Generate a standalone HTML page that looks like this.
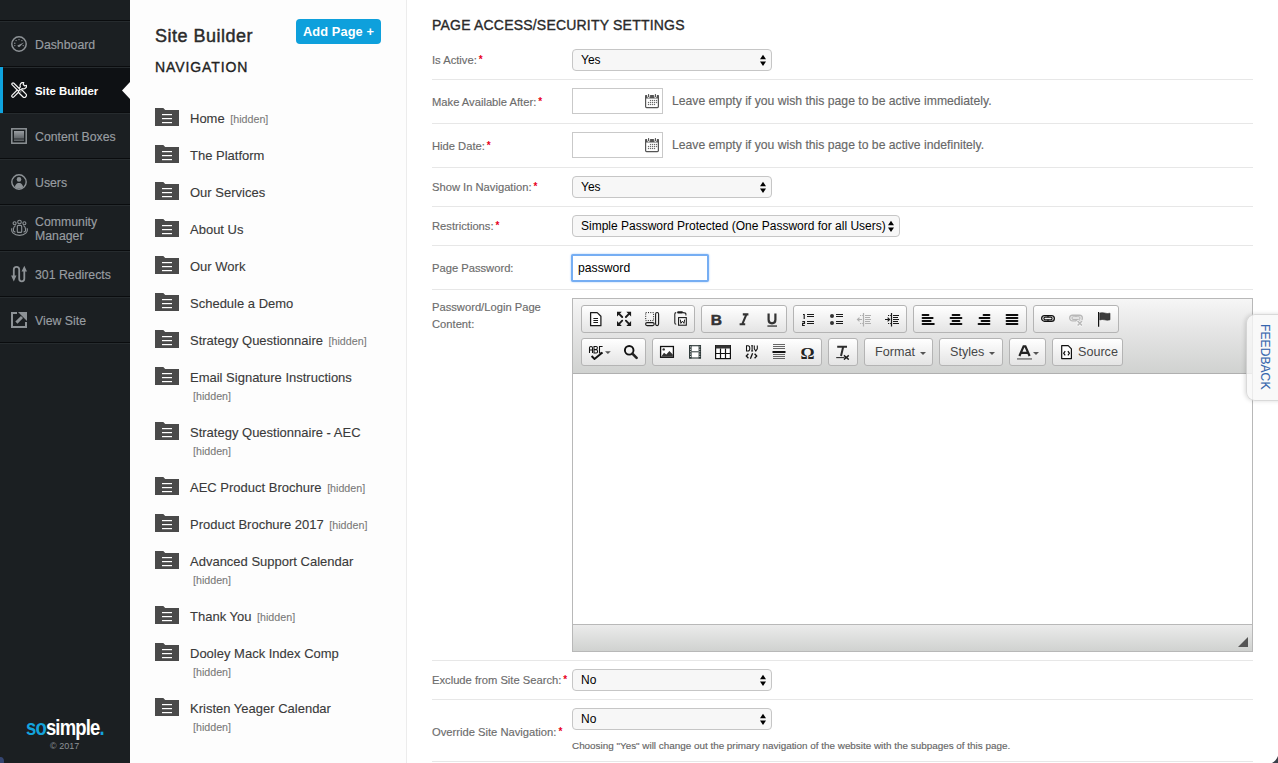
<!DOCTYPE html>
<html><head><meta charset="utf-8">
<style>
*{box-sizing:border-box;margin:0;padding:0}
html,body{width:1278px;height:763px;overflow:hidden;background:#fff;font-family:"Liberation Sans",sans-serif}
.abs{position:absolute}
#side{position:absolute;left:0;top:0;width:130px;height:763px;background:#1b1f22}
.sep{position:absolute;left:0;width:130px;height:2px;border-top:1px solid #0a0c0e;border-bottom:1px solid #262b2e}
.si{position:absolute;left:0;width:130px;height:44px}
.si svg{position:absolute;left:11px;top:14px}
.si .t{position:absolute;left:35px;top:1px;line-height:44px;font-size:12.3px;color:#989da1;-webkit-text-stroke:.15px #989da1;white-space:nowrap}
.si.act{background:#0e1114}
.si.act .t{color:#fff;font-weight:bold;font-size:11.4px;-webkit-text-stroke:0}
#mid{position:absolute;left:130px;top:0;width:276px;height:763px;background:#fdfdfd}
#vline{position:absolute;left:406px;top:0;width:1px;height:763px;background:#ececec}
.ni{position:absolute;left:155px;height:20px;white-space:nowrap}
.fold{position:absolute;left:0;top:0;width:24px;height:18px}
.ni .tx{position:absolute;left:35px;font-size:13px;color:#3a3a3a;-webkit-text-stroke:.12px #3a3a3a}
.ni .hid{font-size:10.7px;color:#7a7a7a;-webkit-text-stroke:.1px #7a7a7a}

/*R*/
.lbl{position:absolute;left:432px;font-size:11.2px;color:#6c6c6c;-webkit-text-stroke:.15px #6c6c6c;white-space:nowrap;line-height:14px}
.req{color:#e8001c;font-weight:bold;font-size:10px;vertical-align:1px;margin-left:2px;-webkit-text-stroke:0}
.hr{position:absolute;left:432px;width:821px;height:1px;background:#e7e7e7}
.sel{position:absolute;left:572px;height:22px;border:1px solid #c6c6c6;border-radius:4px;background:#f7f7f7;font-size:12px;color:#000;line-height:20px;padding-left:8px;white-space:nowrap}
.sel svg{position:absolute;right:4px;top:4px}
.dinp{position:absolute;left:572px;width:91px;height:26px;border:1px solid #c9c9c9;background:#fff}
.dinp svg{position:absolute;left:72px;top:5px}
.help{position:absolute;left:672px;font-size:12.2px;color:#686868;-webkit-text-stroke:.15px #686868;white-space:nowrap;line-height:16px}
/*/R*//*E*/.eg{position:absolute;height:28px;border:1px solid #b4b4b4;border-radius:3px;background:linear-gradient(#ffffff,#e4e4e4)}
.ecb{position:absolute;line-height:26px;font-size:12.6px;color:#474747;white-space:nowrap}
/*/E*/</style></head><body>
<div id="side">
  <div class="sep" style="top:20px"></div>
  <div class="si" style="top:22px">
    <svg width="16" height="16" viewBox="0 0 16 16" style="left:11px;top:14px"><circle cx="8" cy="8" r="7.2" fill="none" stroke="#8d9296" stroke-width="1.5"/><g fill="#8d9296"><circle cx="8" cy="3.6" r=".7"/><circle cx="5.1" cy="4.6" r=".7"/><circle cx="10.9" cy="4.6" r=".7"/><circle cx="3.8" cy="7.2" r=".7"/><circle cx="3.8" cy="9.6" r=".7"/><circle cx="12.2" cy="9.6" r=".7"/><path d="M6.4 9.4 L13 6.6 L8.4 11 Q6.8 11.2 6.4 9.4Z"/></g></svg>
    <span class="t">Dashboard</span></div>
  <div class="sep" style="top:66px"></div>
  <div class="si act" style="top:68px">
    <svg width="16" height="16" viewBox="0 0 16 16" style="left:11px;top:14px"><g stroke="#f4f4f4" stroke-width="1.2" fill="#0e1114"><g transform="rotate(-45 8 8)"><rect x="-1.7" y="6.8" width="10" height="2.4" rx="1.2"/><path d="M7.9 6.8 L11.13 6.8 A3.3 3.3 0 0 1 16.73 5.88 L14.9 7.1 V8.9 L16.73 10.12 A3.3 3.3 0 0 1 11.13 9.2 L7.9 9.2"/></g><g transform="rotate(45 8 8)"><rect x="-1.6" y="6.8" width="10.6" height="2.4" rx="1.2"/><rect x="8.4" y="5.9" width="9.2" height="4.2" rx="2.1"/><circle cx="10.6" cy="8" r=".6" fill="#f2f2f2" stroke="none"/></g></g></svg>
    <span class="t">Site Builder</span></div>
  <div class="sep" style="top:112px"></div>
  <div class="si" style="top:114px">
    <svg width="16" height="16" viewBox="0 0 16 16" style="left:11px;top:14px"><rect x=".8" y=".8" width="14.4" height="14.4" fill="none" stroke="#8d9296" stroke-width="1.5"/><defs><linearGradient id="gb" x1="0" y1="0" x2="0" y2="1"><stop offset="0" stop-color="#9a9ea2"/><stop offset="1" stop-color="#5d6266"/></linearGradient></defs><rect x="3" y="3" width="10" height="7.6" fill="url(#gb)"/><rect x="3" y="11.6" width="10" height="1" fill="#8d9296"/></svg>
    <span class="t">Content Boxes</span></div>
  <div class="sep" style="top:158px"></div>
  <div class="si" style="top:160px">
    <svg width="16" height="16" viewBox="0 0 16 16" style="left:11px;top:14px"><defs><clipPath id="cu"><circle cx="8" cy="8" r="6.6"/></clipPath></defs><circle cx="8" cy="8" r="7.2" fill="none" stroke="#8d9296" stroke-width="1.4"/><circle cx="8" cy="5.4" r="2.3" fill="#8d9296"/><path clip-path="url(#cu)" d="M3.6 16 C3.6 10.8 5.4 8.9 8 8.9 C10.6 8.9 12.4 10.8 12.4 16Z" fill="#8d9296"/></svg>
    <span class="t">Users</span></div>
  <div class="sep" style="top:204px"></div>
  <div class="si" style="top:206px">
    <svg width="18" height="18" viewBox="0 0 18 18" style="left:10px;top:13px"><g fill="none" stroke="#8d9296" stroke-width="1.1"><circle cx="9.5" cy="3" r="1.8"/><circle cx="4.6" cy="4.3" r="1.5"/><circle cx="14.4" cy="4.3" r="1.5"/><rect x="7.3" y="6.4" width="4.4" height="7" rx="1"/><path d="M5.8 6.8 C4 7 3.4 8 3.4 12 L5.4 13.2"/><path d="M13.2 6.8 C15 7 15.6 8 15.6 12 L13.6 13.2"/><path d="M2 9.3 C0.6 12.6 4 16.4 9.5 16.4 C15 16.4 18.4 12.6 17 9.3"/></g></svg>
    <span class="t" style="line-height:14px;top:9px">Community<br>Manager</span></div>
  <div class="sep" style="top:250px"></div>
  <div class="si" style="top:252px">
    <svg width="18" height="20" viewBox="0 0 18 20" style="left:10px;top:12px"><path d="M3.8 12.5 V5.6 A2.7 2.7 0 0 1 9.2 5.6 V14.8 A2.55 2.55 0 0 0 14.3 14.8 V7" fill="none" stroke="#8d9296" stroke-width="1.8"/><path d="M1.1 11.6 H6.5 L3.8 17.6Z M11.5 7.6 H17 L14.3 1.8Z" fill="#8d9296"/></svg>
    <span class="t">301 Redirects</span></div>
  <div class="sep" style="top:296px"></div>
  <div class="si" style="top:298px">
    <svg width="16" height="16" viewBox="0 0 16 16" style="left:11px;top:14px"><path d="M6 1 H1 V15 H15 V10" fill="none" stroke="#8d9296" stroke-width="2"/><path d="M5.4 10.6 L11 5" stroke="#8d9296" stroke-width="3"/><path d="M7 0 H16 V9Z" fill="#8d9296"/></svg>
    <span class="t">View Site</span></div>
  <div class="sep" style="top:342px"></div>
  <div class="abs" style="left:0;top:67px;width:3px;height:46px;background:#0ea3df"></div>
  <svg class="abs" style="left:122px;top:82px" width="8" height="17" viewBox="0 0 8 17"><path d="M8 0 L0 8.5 L8 17Z" fill="#fdfdfd"/></svg>
  <div class="abs" id="logo" style="left:26px;top:716px;font-weight:bold;font-size:22px;letter-spacing:-1px;color:#fff;line-height:24px;transform:scaleX(.84);transform-origin:0 0;white-space:nowrap"><span style="color:#13a3dc">so</span>simple<span style="color:#13a3dc">.</span></div>
  <div class="abs" style="left:50px;top:741px;font-size:9px;color:#8d9296;line-height:10px">&copy; 2017</div>
</div>
<div id="mid"></div>
<div class="abs" style="left:155px;top:26px;font-size:18px;letter-spacing:.5px;color:#2b2b2b;-webkit-text-stroke:.45px #2b2b2b">Site Builder</div>
<div class="abs" id="addbtn" style="left:296px;top:19px;width:85px;height:25px;border-radius:4px;background:#0ea0dc;color:#fff;font-weight:bold;font-size:12.8px;line-height:26px;text-align:center;letter-spacing:.1px">Add Page +</div>
<div class="abs" style="left:155px;top:59px;font-size:14px;color:#222;letter-spacing:.9px;-webkit-text-stroke:.35px #222">NAVIGATION</div>
<div class="ni" style="top:108px"><svg class="fold" width="24" height="18" viewBox="0 0 24 18"><path d="M0 0 H8.3 L10.2 2 H24 V18 H0Z" fill="#4a4a4a"/><rect x="7" y="6" width="10" height="1.2" fill="#fff"/><rect x="7" y="10" width="10" height="1.2" fill="#fff"/><rect x="7" y="14" width="10" height="1.2" fill="#fff"/></svg><div class="tx" style="top:2px;line-height:18px">Home <span class="hid" style="margin-left:2px">[hidden]</span></div></div>
<div class="ni" style="top:145px"><svg class="fold" width="24" height="18" viewBox="0 0 24 18"><path d="M0 0 H8.3 L10.2 2 H24 V18 H0Z" fill="#4a4a4a"/><rect x="7" y="6" width="10" height="1.2" fill="#fff"/><rect x="7" y="10" width="10" height="1.2" fill="#fff"/><rect x="7" y="14" width="10" height="1.2" fill="#fff"/></svg><div class="tx" style="top:2px;line-height:18px">The Platform</div></div>
<div class="ni" style="top:182px"><svg class="fold" width="24" height="18" viewBox="0 0 24 18"><path d="M0 0 H8.3 L10.2 2 H24 V18 H0Z" fill="#4a4a4a"/><rect x="7" y="6" width="10" height="1.2" fill="#fff"/><rect x="7" y="10" width="10" height="1.2" fill="#fff"/><rect x="7" y="14" width="10" height="1.2" fill="#fff"/></svg><div class="tx" style="top:2px;line-height:18px">Our Services</div></div>
<div class="ni" style="top:219px"><svg class="fold" width="24" height="18" viewBox="0 0 24 18"><path d="M0 0 H8.3 L10.2 2 H24 V18 H0Z" fill="#4a4a4a"/><rect x="7" y="6" width="10" height="1.2" fill="#fff"/><rect x="7" y="10" width="10" height="1.2" fill="#fff"/><rect x="7" y="14" width="10" height="1.2" fill="#fff"/></svg><div class="tx" style="top:2px;line-height:18px">About Us</div></div>
<div class="ni" style="top:256px"><svg class="fold" width="24" height="18" viewBox="0 0 24 18"><path d="M0 0 H8.3 L10.2 2 H24 V18 H0Z" fill="#4a4a4a"/><rect x="7" y="6" width="10" height="1.2" fill="#fff"/><rect x="7" y="10" width="10" height="1.2" fill="#fff"/><rect x="7" y="14" width="10" height="1.2" fill="#fff"/></svg><div class="tx" style="top:2px;line-height:18px">Our Work</div></div>
<div class="ni" style="top:293px"><svg class="fold" width="24" height="18" viewBox="0 0 24 18"><path d="M0 0 H8.3 L10.2 2 H24 V18 H0Z" fill="#4a4a4a"/><rect x="7" y="6" width="10" height="1.2" fill="#fff"/><rect x="7" y="10" width="10" height="1.2" fill="#fff"/><rect x="7" y="14" width="10" height="1.2" fill="#fff"/></svg><div class="tx" style="top:2px;line-height:18px">Schedule a Demo</div></div>
<div class="ni" style="top:330px"><svg class="fold" width="24" height="18" viewBox="0 0 24 18"><path d="M0 0 H8.3 L10.2 2 H24 V18 H0Z" fill="#4a4a4a"/><rect x="7" y="6" width="10" height="1.2" fill="#fff"/><rect x="7" y="10" width="10" height="1.2" fill="#fff"/><rect x="7" y="14" width="10" height="1.2" fill="#fff"/></svg><div class="tx" style="top:2px;line-height:18px">Strategy Questionnaire <span class="hid" style="margin-left:2px">[hidden]</span></div></div>
<div class="ni" style="top:367px"><svg class="fold" width="24" height="18" viewBox="0 0 24 18"><path d="M0 0 H8.3 L10.2 2 H24 V18 H0Z" fill="#4a4a4a"/><rect x="7" y="6" width="10" height="1.2" fill="#fff"/><rect x="7" y="10" width="10" height="1.2" fill="#fff"/><rect x="7" y="14" width="10" height="1.2" fill="#fff"/></svg><div class="tx" style="top:2px;line-height:18px">Email Signature Instructions</div><div class="tx hid" style="left:38px;top:20px;line-height:18px">[hidden]</div></div>
<div class="ni" style="top:422px"><svg class="fold" width="24" height="18" viewBox="0 0 24 18"><path d="M0 0 H8.3 L10.2 2 H24 V18 H0Z" fill="#4a4a4a"/><rect x="7" y="6" width="10" height="1.2" fill="#fff"/><rect x="7" y="10" width="10" height="1.2" fill="#fff"/><rect x="7" y="14" width="10" height="1.2" fill="#fff"/></svg><div class="tx" style="top:2px;line-height:18px">Strategy Questionnaire - AEC</div><div class="tx hid" style="left:38px;top:20px;line-height:18px">[hidden]</div></div>
<div class="ni" style="top:477px"><svg class="fold" width="24" height="18" viewBox="0 0 24 18"><path d="M0 0 H8.3 L10.2 2 H24 V18 H0Z" fill="#4a4a4a"/><rect x="7" y="6" width="10" height="1.2" fill="#fff"/><rect x="7" y="10" width="10" height="1.2" fill="#fff"/><rect x="7" y="14" width="10" height="1.2" fill="#fff"/></svg><div class="tx" style="top:2px;line-height:18px">AEC Product Brochure <span class="hid" style="margin-left:2px">[hidden]</span></div></div>
<div class="ni" style="top:514px"><svg class="fold" width="24" height="18" viewBox="0 0 24 18"><path d="M0 0 H8.3 L10.2 2 H24 V18 H0Z" fill="#4a4a4a"/><rect x="7" y="6" width="10" height="1.2" fill="#fff"/><rect x="7" y="10" width="10" height="1.2" fill="#fff"/><rect x="7" y="14" width="10" height="1.2" fill="#fff"/></svg><div class="tx" style="top:2px;line-height:18px">Product Brochure 2017 <span class="hid" style="margin-left:2px">[hidden]</span></div></div>
<div class="ni" style="top:551px"><svg class="fold" width="24" height="18" viewBox="0 0 24 18"><path d="M0 0 H8.3 L10.2 2 H24 V18 H0Z" fill="#4a4a4a"/><rect x="7" y="6" width="10" height="1.2" fill="#fff"/><rect x="7" y="10" width="10" height="1.2" fill="#fff"/><rect x="7" y="14" width="10" height="1.2" fill="#fff"/></svg><div class="tx" style="top:2px;line-height:18px">Advanced Support Calendar</div><div class="tx hid" style="left:38px;top:20px;line-height:18px">[hidden]</div></div>
<div class="ni" style="top:606px"><svg class="fold" width="24" height="18" viewBox="0 0 24 18"><path d="M0 0 H8.3 L10.2 2 H24 V18 H0Z" fill="#4a4a4a"/><rect x="7" y="6" width="10" height="1.2" fill="#fff"/><rect x="7" y="10" width="10" height="1.2" fill="#fff"/><rect x="7" y="14" width="10" height="1.2" fill="#fff"/></svg><div class="tx" style="top:2px;line-height:18px">Thank You <span class="hid" style="margin-left:2px">[hidden]</span></div></div>
<div class="ni" style="top:643px"><svg class="fold" width="24" height="18" viewBox="0 0 24 18"><path d="M0 0 H8.3 L10.2 2 H24 V18 H0Z" fill="#4a4a4a"/><rect x="7" y="6" width="10" height="1.2" fill="#fff"/><rect x="7" y="10" width="10" height="1.2" fill="#fff"/><rect x="7" y="14" width="10" height="1.2" fill="#fff"/></svg><div class="tx" style="top:2px;line-height:18px">Dooley Mack Index Comp</div><div class="tx hid" style="left:38px;top:20px;line-height:18px">[hidden]</div></div>
<div class="ni" style="top:698px"><svg class="fold" width="24" height="18" viewBox="0 0 24 18"><path d="M0 0 H8.3 L10.2 2 H24 V18 H0Z" fill="#4a4a4a"/><rect x="7" y="6" width="10" height="1.2" fill="#fff"/><rect x="7" y="10" width="10" height="1.2" fill="#fff"/><rect x="7" y="14" width="10" height="1.2" fill="#fff"/></svg><div class="tx" style="top:2px;line-height:18px">Kristen Yeager Calendar</div><div class="tx hid" style="left:38px;top:20px;line-height:18px">[hidden]</div></div>

<div id="vline"></div>









<svg id="corner" class="abs" style="left:1270px;top:755px" width="8" height="8"><path d="M8 1 V8 H2 Q6 6 8 1Z" fill="#3a3f4a"/></svg>
<div class="abs" style="left:-3px;top:757px;width:7px;height:9px;border-radius:50%;background:#3c4f86;opacity:.8"></div>



<!--RIGHT-->
<div class="abs" style="left:432px;top:17px;font-size:14px;color:#2a2a2a;letter-spacing:.2px;-webkit-text-stroke:.35px #2a2a2a;white-space:nowrap">PAGE ACCESS/SECURITY SETTINGS</div>
<div class="lbl" style="top:53px">Is Active:<span class="req">*</span></div>
<div class="sel" style="top:49px;width:200px">Yes<svg width="8" height="14" viewBox="0 0 8 14"><path d="M1 5.3 L4 .8 L7 5.3Z M1 7.6 L7 7.6 L4 12.1Z" fill="#000"/></svg></div>
<div class="hr" style="top:79px"></div>
<div class="lbl" style="top:95px">Make Available After:<span class="req">*</span></div>
<div class="dinp" style="top:88px"><svg width="14" height="15" viewBox="0 0 14 15"><rect x="0.6" y="1.6" width="12.8" height="12" rx="1" fill="#fff" stroke="#555" stroke-width="1.2"/><rect x="0" y="1" width="14" height="3.6" rx="1" fill="#555"/><g fill="none" stroke="#fff" stroke-width="1"><path d="M2.6 1 V2.4 Q2.6 3.6 3.6 3.6 Q4.6 3.6 4.6 2.4 V1"/><path d="M9.4 1 V2.4 Q9.4 3.6 10.4 3.6 Q11.4 3.6 11.4 2.4 V1"/></g><g fill="#555"><rect x="3.1" y="0" width="1" height="3"/><rect x="9.9" y="0" width="1" height="3"/></g><g fill="#6a6a6a"><rect x="4.9" y="5.9" width="1.2" height="1.2"/><rect x="6.9" y="5.9" width="1.2" height="1.2"/><rect x="8.9" y="5.9" width="1.2" height="1.2"/><rect x="10.9" y="5.9" width="1.2" height="1.2"/><rect x="2.9" y="7.9" width="1.2" height="1.2"/><rect x="4.9" y="7.9" width="1.2" height="1.2"/><rect x="6.9" y="7.9" width="1.2" height="1.2"/><rect x="8.9" y="7.9" width="1.2" height="1.2"/><rect x="10.9" y="7.9" width="1.2" height="1.2"/><rect x="2.9" y="9.9" width="1.2" height="1.2"/><rect x="4.9" y="9.9" width="1.2" height="1.2"/><rect x="6.9" y="9.9" width="1.2" height="1.2"/><rect x="8.9" y="9.9" width="1.2" height="1.2"/></g></svg></div>
<div class="help" style="top:93px">Leave empty if you wish this page to be active immediately.</div>
<div class="hr" style="top:123px"></div>
<div class="lbl" style="top:139px">Hide Date:<span class="req">*</span></div>
<div class="dinp" style="top:132px"><svg width="14" height="15" viewBox="0 0 14 15"><rect x="0.6" y="1.6" width="12.8" height="12" rx="1" fill="#fff" stroke="#555" stroke-width="1.2"/><rect x="0" y="1" width="14" height="3.6" rx="1" fill="#555"/><g fill="none" stroke="#fff" stroke-width="1"><path d="M2.6 1 V2.4 Q2.6 3.6 3.6 3.6 Q4.6 3.6 4.6 2.4 V1"/><path d="M9.4 1 V2.4 Q9.4 3.6 10.4 3.6 Q11.4 3.6 11.4 2.4 V1"/></g><g fill="#555"><rect x="3.1" y="0" width="1" height="3"/><rect x="9.9" y="0" width="1" height="3"/></g><g fill="#6a6a6a"><rect x="4.9" y="5.9" width="1.2" height="1.2"/><rect x="6.9" y="5.9" width="1.2" height="1.2"/><rect x="8.9" y="5.9" width="1.2" height="1.2"/><rect x="10.9" y="5.9" width="1.2" height="1.2"/><rect x="2.9" y="7.9" width="1.2" height="1.2"/><rect x="4.9" y="7.9" width="1.2" height="1.2"/><rect x="6.9" y="7.9" width="1.2" height="1.2"/><rect x="8.9" y="7.9" width="1.2" height="1.2"/><rect x="10.9" y="7.9" width="1.2" height="1.2"/><rect x="2.9" y="9.9" width="1.2" height="1.2"/><rect x="4.9" y="9.9" width="1.2" height="1.2"/><rect x="6.9" y="9.9" width="1.2" height="1.2"/><rect x="8.9" y="9.9" width="1.2" height="1.2"/></g></svg></div>
<div class="help" style="top:137px">Leave empty if you wish this page to be active indefinitely.</div>
<div class="hr" style="top:167px"></div>
<div class="lbl" style="top:180px">Show In Navigation:<span class="req">*</span></div>
<div class="sel" style="top:176px;width:200px">Yes<svg width="8" height="14" viewBox="0 0 8 14"><path d="M1 5.3 L4 .8 L7 5.3Z M1 7.6 L7 7.6 L4 12.1Z" fill="#000"/></svg></div>
<div class="hr" style="top:206px"></div>
<div class="lbl" style="top:219px">Restrictions:<span class="req">*</span></div>
<div class="sel" style="top:215px;width:328px">Simple Password Protected (One Password for all Users)<svg width="8" height="14" viewBox="0 0 8 14"><path d="M1 5.3 L4 .8 L7 5.3Z M1 7.6 L7 7.6 L4 12.1Z" fill="#000"/></svg></div>
<div class="hr" style="top:245px"></div>
<div class="lbl" style="top:261px">Page Password:</div>
<div class="abs" style="left:571px;top:254px;width:138px;height:28px;border:2px solid #76aef3;border-radius:2px;box-shadow:0 0 2px #9cc4f6;background:#fff;font-size:12.2px;color:#000;line-height:24px;padding-left:5px">password</div>
<div class="hr" style="top:289px"></div>
<div class="lbl" style="top:299px;line-height:17px">Password/Login Page<br>Content:</div>
<!--EDITOR-->
<div id="ed" class="abs" style="left:572px;top:298px;width:681px;height:354px;border:1px solid #b8b8b8;background:#fff"><div class="abs" style="left:0;top:0;width:679px;height:75px;background:linear-gradient(#f6f6f6,#e6e6e6 40%,#d0d2d0);border-bottom:1px solid #b0b0b0"></div><div class="eg" style="left:8px;top:6px;width:114px"></div><div class="eg" style="left:128px;top:6px;width:86px"></div><div class="eg" style="left:220px;top:6px;width:114px"></div><div class="eg" style="left:340px;top:6px;width:114px"></div><div class="eg" style="left:460px;top:6px;width:86px"></div><div class="eg" style="left:8px;top:39px;width:65px"></div><div class="eg" style="left:79px;top:39px;width:170px"></div><div class="eg" style="left:255px;top:39px;width:30px"></div><div class="eg" style="left:291px;top:39px;width:69px"></div><div class="eg" style="left:366px;top:39px;width:64px"></div><div class="eg" style="left:436px;top:39px;width:37px"></div><div class="eg" style="left:479px;top:39px;width:71px"></div><div class="abs" style="left:15px;top:12px;line-height:0"><svg width="16" height="16" viewBox="0 0 16 16"><path d="M2.6 1.6 H9.2 L12.9 5.3 V14.7 H2.6Z" fill="#fff" stroke="#1a1a1a" stroke-width="1.25" stroke-linejoin="round"/><path d="M5.4 7.5 H10 M5.4 9.5 H10 M5.4 11.5 H10" stroke="#1a1a1a" stroke-width="1"/></svg></div><div class="abs" style="left:43px;top:12px;line-height:0"><svg width="16" height="16" viewBox="0 0 16 16"><g fill="#1a1a1a"><path d="M1 .8 H5.8 L1 5.6Z M15.1 .8 H10.3 L15.1 5.6Z M1 14.9 H5.8 L1 10.1Z M15.1 14.9 H10.3 L15.1 10.1Z"/></g><path d="M2.6 2.4 L6.2 6 M13.5 2.4 L9.9 6 M2.6 13.3 L6.2 9.7 M13.5 13.3 L9.9 9.7" stroke="#1a1a1a" stroke-width="1.9" stroke-linecap="round"/></svg></div><div class="abs" style="left:71px;top:12px;line-height:0"><svg width="16" height="16" viewBox="0 0 16 16"><path d="M1.7 1.6 H9.6 V9.6 H1.7Z" fill="none" stroke="#1a1a1a" stroke-width="1" stroke-dasharray="1 1.3"/><rect x="1.6" y="11.6" width="8.6" height="3" rx="1.5" fill="none" stroke="#1a1a1a" stroke-width="1.1"/><rect x="11.6" y="1.5" width="3" height="13.1" rx="1.5" fill="none" stroke="#1a1a1a" stroke-width="1.1"/></svg></div><div class="abs" style="left:99px;top:12px;line-height:0"><svg width="16" height="16" viewBox="0 0 16 16"><path d="M4.2 1.6 Q2.8 1.6 2.8 3 V12 Q2.8 13.3 4.2 13.3 M10.8 1.6 Q13.9 1.6 13.9 3 V4.6" fill="none" stroke="#1a1a1a" stroke-width="1.05"/><rect x="5.1" y=".3" width="5.9" height="2.2" rx="1.1" fill="#1a1a1a"/><rect x="6.6" y="6.6" width="7.7" height="7.6" fill="#fff" stroke="#1a1a1a" stroke-width="1.1"/><path d="M8.3 8.6 L8.9 12.4 L10.45 10.2 L12 12.4 L12.6 8.6" fill="none" stroke="#1a1a1a" stroke-width="1"/></svg></div><div class="abs" style="left:135px;top:12px;line-height:0"><svg width="16" height="16" viewBox="0 0 16 16"><text x="8.4" y="14" text-anchor="middle" font-family="Liberation Sans" font-weight="bold" font-size="15.5" fill="#333" stroke="#333" stroke-width=".55">B</text></svg></div><div class="abs" style="left:163px;top:12px;line-height:0"><svg width="16" height="16" viewBox="0 0 16 16"><path d="M6.8 3.4 H12.4 M3.6 13.3 H9.2 M10.4 3.4 L6.2 13.3" fill="none" stroke="#333" stroke-width="2.1"/></svg></div><div class="abs" style="left:191px;top:12px;line-height:0"><svg width="16" height="16" viewBox="0 0 16 16"><path d="M4.6 2.5 V8.8 Q4.6 12.3 8 12.3 Q11.4 12.3 11.4 8.8 V2.5" fill="none" stroke="#333" stroke-width="2.2"/><rect x="3.4" y="14.4" width="9.6" height="1.3" fill="#333"/></svg></div><div class="abs" style="left:227px;top:12px;line-height:0"><svg width="16" height="16" viewBox="0 0 16 16"><path d="M3 3.5 H4.2 V8 M2.3 10.5 H4.5 V12.4 H2.6 V14.5 H4.8" fill="none" stroke="#1a1a1a" stroke-width="1.15"/><path d="M7 3.5 H14 M7 5.5 H14 M7 10.5 H14 M7 12.5 H14" stroke="#1a1a1a" stroke-width="1.2"/></svg></div><div class="abs" style="left:255px;top:12px;line-height:0"><svg width="16" height="16" viewBox="0 0 16 16"><circle cx="4" cy="5" r="2" fill="#333"/><circle cx="4" cy="12" r="2" fill="#333"/><path d="M8 3.5 H15 M8 5.5 H15 M8 10.5 H15 M8 12.5 H15" stroke="#1a1a1a" stroke-width="1.2"/></svg></div><div class="abs" style="left:283px;top:12px;line-height:0"><svg width="16" height="16" viewBox="0 0 16 16"><path d="M7.5 2 V15.5" stroke="#b0b0b0" stroke-width="1.2"/><path d="M9 4.5 H15 M9 6.5 H14 M9 8.5 H15 M9 10.5 H14 M9 12.5 H15" stroke="#b0b0b0" stroke-width="1.1"/><path d="M1.5 8.5 H6 M3.5 6.6 L1.5 8.5 L3.5 10.4" fill="none" stroke="#b0b0b0" stroke-width="1.2"/><g fill="#b0b0b0"><rect x="4" y="4" width="1" height="1"/><rect x="5.8" y="4" width="1" height="1"/><rect x="4" y="12" width="1" height="1"/><rect x="5.8" y="12" width="1" height="1"/></g></svg></div><div class="abs" style="left:311px;top:12px;line-height:0"><svg width="16" height="16" viewBox="0 0 16 16"><path d="M7.5 2 V15.5" stroke="#1a1a1a" stroke-width="1.2"/><path d="M9 4.5 H15 M9 6.5 H14 M9 8.5 H15 M9 10.5 H14 M9 12.5 H15" stroke="#1a1a1a" stroke-width="1.1"/><path d="M1 8.5 H5.6 M3.6 6.6 L5.6 8.5 L3.6 10.4" fill="none" stroke="#1a1a1a" stroke-width="1.2"/><g fill="#1a1a1a"><rect x="4" y="4" width="1" height="1"/><rect x="5.8" y="4" width="1" height="1"/><rect x="4" y="12" width="1" height="1"/><rect x="5.8" y="12" width="1" height="1"/></g></svg></div><div class="abs" style="left:347px;top:12px;line-height:0"><svg width="16" height="16" viewBox="0 0 16 16"><path d="M2.6 4 H8.4 M2.6 7 H12.6 M2.6 10 H10.6 M2.6 13 H13.8 " stroke="#0d0d0d" stroke-width="2" stroke-linecap="round"/></svg></div><div class="abs" style="left:375px;top:12px;line-height:0"><svg width="16" height="16" viewBox="0 0 16 16"><path d="M4.6 4 H11.4 M2.6 7 H13.4 M4.6 10 H11.4 M2.6 13 H13.4 " stroke="#0d0d0d" stroke-width="2" stroke-linecap="round"/></svg></div><div class="abs" style="left:403px;top:12px;line-height:0"><svg width="16" height="16" viewBox="0 0 16 16"><path d="M7.6 4 H13.4 M3.6 7 H13.4 M5.6 10 H13.4 M2.6 13 H13.4 " stroke="#0d0d0d" stroke-width="2" stroke-linecap="round"/></svg></div><div class="abs" style="left:431px;top:12px;line-height:0"><svg width="16" height="16" viewBox="0 0 16 16"><path d="M2.6 4 H13.4 M2.6 7 H13.4 M2.6 10 H13.4 M2.6 13 H13.4 " stroke="#0d0d0d" stroke-width="2" stroke-linecap="round"/></svg></div><div class="abs" style="left:467px;top:12px;line-height:0"><svg width="16" height="16" viewBox="0 0 16 16"><rect x="1.65" y="4.55" width="12.7" height="5.7" rx="2.85" fill="none" stroke="#111" stroke-width="1.3"/><rect x="3.9" y="6.1" width="8.2" height="2.6" rx="1.3" fill="none" stroke="#111" stroke-width="1.1"/><path d="M8 4.6 V6.2 M8 8.6 V10.2" stroke="#111" stroke-width="1.1"/></svg></div><div class="abs" style="left:495px;top:12px;line-height:0"><svg width="16" height="16" viewBox="0 0 16 16"><g transform="translate(0 -.3)"><rect x="1.65" y="4.55" width="12.7" height="5.7" rx="2.85" fill="none" stroke="#b8b8b8" stroke-width="1.3"/><rect x="3.9" y="6.1" width="8.2" height="2.6" rx="1.3" fill="none" stroke="#b8b8b8" stroke-width="1.1"/><path d="M8 4.6 V6.2 M8 8.6 V10.2" stroke="#b8b8b8" stroke-width="1.1"/></g><path d="M9.2 9.6 L14.4 15 M14.4 9.6 L9.2 15" stroke="#f6f6f6" stroke-width="3"/><path d="M9.6 10 L14 14.6 M14 10 L9.6 14.6" stroke="#b8b8b8" stroke-width="1.5"/></svg></div><div class="abs" style="left:523px;top:12px;line-height:0"><svg width="16" height="16" viewBox="0 0 16 16"><path d="M2.6 1 V15.8" stroke="#111" stroke-width="1.2"/><path d="M3.8 2 Q6 1.3 8.5 2 Q11.5 3 14 2.2 V8.8 Q11.5 9.7 8.5 8.8 Q6 8 3.8 9Z" fill="#3c3c3c" stroke="#2a2a2a" stroke-width=".6"/></svg></div><div class="abs" style="left:15px;top:45px;line-height:0"><svg width="24" height="16" viewBox="0 0 24 16"><g fill="none" stroke="#111" stroke-width="1.05"><path d="M1.5 9 V4 Q1.5 2.5 3 2.5 Q4.5 2.5 4.5 4 V9 M1.5 6 H4.5"/><path d="M6 9 V2.5 H8.2 Q9.4 2.5 9.4 3.8 Q9.4 5.4 8 5.6 Q9.6 5.8 9.6 7.4 Q9.6 9 8.2 9Z M6 5.6 H8"/><path d="M14.6 2.5 H11.5 V9 H14.6"/></g><path d="M3.6 12 L6.5 15 L14.4 8.4" fill="none" stroke="#111" stroke-width="1.9"/><path d="M17 7.2 H22.8 L19.9 9.9Z" fill="#555"/></svg></div><div class="abs" style="left:49px;top:45px;line-height:0"><svg width="16" height="16" viewBox="0 0 16 16"><circle cx="7.2" cy="6.3" r="4.3" fill="none" stroke="#111" stroke-width="1.9"/><path d="M10.4 9.6 L14.6 13.8" stroke="#222" stroke-width="2.6" stroke-linecap="round"/></svg></div><div class="abs" style="left:86px;top:45px;line-height:0"><svg width="16" height="16" viewBox="0 0 16 16"><rect x="1.6" y="2.5" width="12.8" height="10.8" fill="#fff" stroke="#111" stroke-width="1.3"/><circle cx="4.7" cy="5.4" r="1.2" fill="#333"/><path d="M2.2 12.7 L5 8.8 L7.3 10.6 L10.4 7 L13.8 10.4 V12.7Z" fill="#333"/></svg></div><div class="abs" style="left:114px;top:45px;line-height:0"><svg width="16" height="16" viewBox="0 0 16 16"><rect x="2.7" y="1.7" width="10.8" height="12.3" fill="#fff" stroke="#2a3535" stroke-width="1.1"/><rect x="2.2" y="1.2" width="2.4" height="13.3" fill="#2a3535"/><rect x="11.6" y="1.2" width="2.4" height="13.3" fill="#2a3535"/><path d="M4.6 7.8 H11.6" stroke="#2a3535" stroke-width="1"/><g fill="#fff"><rect x="3" y="2.4" width=".8" height="1"/><rect x="3" y="4.8" width=".8" height="1"/><rect x="3" y="7.2" width=".8" height="1"/><rect x="3" y="9.6" width=".8" height="1"/><rect x="3" y="12" width=".8" height="1"/><rect x="12.4" y="2.4" width=".8" height="1"/><rect x="12.4" y="4.8" width=".8" height="1"/><rect x="12.4" y="7.2" width=".8" height="1"/><rect x="12.4" y="9.6" width=".8" height="1"/><rect x="12.4" y="12" width=".8" height="1"/></g></svg></div><div class="abs" style="left:142px;top:45px;line-height:0"><svg width="16" height="16" viewBox="0 0 16 16"><rect x=".6" y="1.6" width="14.8" height="13" fill="#fff" stroke="#111" stroke-width="1.2"/><rect x=".6" y="1.1" width="14.8" height="3.4" fill="#333"/><path d="M5.5 4.5 V14.6 M10.5 4.5 V14.6 M.6 9.5 H15.4" stroke="#111" stroke-width="1.2"/></svg></div><div class="abs" style="left:170px;top:45px;line-height:0"><svg width="16" height="16" viewBox="0 0 16 16"><g fill="none" stroke="#111" stroke-width="1.05"><path d="M3.5 1.8 V7 H5 Q6.8 7 6.8 4.4 Q6.8 1.8 5 1.8Z"/><path d="M8.1 1.8 H10.1 M9.1 1.8 V7 M8.1 7 H10.1"/><path d="M11.3 1.5 V4.8 L12.8 7 L14.3 4.8 V1.5"/><path d="M5.4 9.8 L3.3 12 L5.4 14.2 M11.6 9.8 L13.7 12 L11.6 14.2 M9.6 9.2 L7.4 14.8" stroke-width="1.3"/></g></svg></div><div class="abs" style="left:198px;top:45px;line-height:0"><svg width="16" height="16" viewBox="0 0 16 16"><path d="M2 .5 H14 M2 2.5 H14 M2 4.5 H14 M2 10.5 H14 M2 12.5 H14 M2 14.5 H14" stroke="#555" stroke-width=".9"/><path d="M1.5 8 H14.5" stroke="#111" stroke-width="2"/></svg></div><div class="abs" style="left:226px;top:45px;line-height:0"><svg width="16" height="16" viewBox="0 0 16 16"><text x="8.6" y="15" text-anchor="middle" font-family="Liberation Serif" font-weight="bold" font-size="17.5" fill="#222">&#937;</text></svg></div><div class="abs" style="left:262px;top:45px;line-height:0"><svg width="16" height="16" viewBox="0 0 16 16"><path d="M2.2 2.8 H12 M8.2 2.8 L6 12" fill="none" stroke="#2d2d2d" stroke-width="2"/><path d="M1.2 13.6 H9.6" stroke="#2d2d2d" stroke-width="1.1"/><path d="M8.9 11.4 L13.8 15.6 M13.8 11.4 L8.9 15.6" stroke="#1e1e1e" stroke-width="1.4"/></svg></div><div class="ecb" style="left:302px;top:40px">Format</div><div class="abs" style="left:347px;top:52px;line-height:0"><svg width="7" height="4" viewBox="0 0 7 4"><path d="M0 0 H6 L3 3Z" fill="#555"/></svg></div><div class="ecb" style="left:377px;top:40px">Styles</div><div class="abs" style="left:416px;top:52px;line-height:0"><svg width="7" height="4" viewBox="0 0 7 4"><path d="M0 0 H6 L3 3Z" fill="#555"/></svg></div><div class="abs" style="left:444px;top:45px;line-height:0"><svg width="16" height="16" viewBox="0 0 16 16"><path d="M2.4 12 L6.6 2.4 H8.4 L12.6 12 M4.3 8.9 H10.7" fill="none" stroke="#222" stroke-width="2.2" stroke-linejoin="miter"/><rect x="0" y="14" width="15" height="1.8" fill="#8a8a8a"/></svg></div><div class="abs" style="left:460px;top:52px;line-height:0"><svg width="7" height="4" viewBox="0 0 7 4"><path d="M0 0 H6 L3 3Z" fill="#555"/></svg></div><div class="abs" style="left:487px;top:45px;line-height:0"><svg width="16" height="16" viewBox="0 0 16 16"><path d="M1.7 1.6 H8.2 L11.4 4.8 V14.6 H1.7Z" fill="#fff" stroke="#111" stroke-width="1.2" stroke-linejoin="round"/><path d="M5.2 7.2 L3.7 9.3 L5.2 11.4 M7.9 7.2 L9.4 9.3 L7.9 11.4" fill="none" stroke="#111" stroke-width="1.2"/></svg></div><div class="ecb" style="left:505px;top:40px">Source</div><div class="abs" style="left:0;top:325px;width:679px;height:27px;border-top:1px solid #b8b8b8;background:linear-gradient(#ebebeb,#d0d2d0)"><svg class="abs" style="left:665px;top:12px" width="10" height="10"><path d="M10 0 V10 H0Z" fill="#555"/></svg></div></div>
<div class="hr" style="top:660px"></div>
<div class="lbl" style="top:673px">Exclude from Site Search:<span class="req">*</span></div>
<div class="sel" style="top:669px;width:200px">No<svg width="8" height="14" viewBox="0 0 8 14"><path d="M1 5.3 L4 .8 L7 5.3Z M1 7.6 L7 7.6 L4 12.1Z" fill="#000"/></svg></div>
<div class="hr" style="top:699px"></div>
<div class="lbl" style="top:725px">Override Site Navigation:<span class="req">*</span></div>
<div class="sel" style="top:708px;width:200px">No<svg width="8" height="14" viewBox="0 0 8 14"><path d="M1 5.3 L4 .8 L7 5.3Z M1 7.6 L7 7.6 L4 12.1Z" fill="#000"/></svg></div>
<div class="abs" style="left:572px;top:740px;font-size:9.9px;color:#666;white-space:nowrap;-webkit-text-stroke:.15px #666">Choosing "Yes" will change out the primary navigation of the website with the subpages of this page.</div>
<div class="hr" style="top:761px"></div>
<div class="abs" style="left:1246px;top:314px;width:40px;height:87px;border:1px solid rgba(0,0,0,.13);border-radius:9px 0 0 9px;background:rgba(248,248,248,.8);box-shadow:-1px 0 4px rgba(0,0,0,.15)"></div>
<div class="abs" style="left:1233px;top:349px;width:64px;height:14px;transform:rotate(90deg);font-size:12px;line-height:14px;color:#3565ad;text-align:center;letter-spacing:.1px;-webkit-text-stroke:.1px #3565ad">FEEDBACK</div>
<!--/RIGHT-->
</body></html>
